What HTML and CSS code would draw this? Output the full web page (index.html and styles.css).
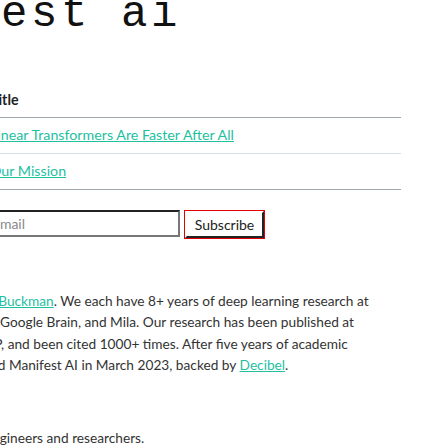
FILE: index.html
```html
<!DOCTYPE html>
<html lang="en">
<head>
<meta charset="utf-8">
<title>Manifest AI</title>
<link rel="stylesheet" href="styles.css">
</head>
<body>
<header class="masthead">
  <h1 class="logo">Manifest ai</h1>
</header>
<main class="content">
  <table class="posts">
    <thead>
      <tr><th>Title</th></tr>
    </thead>
    <tbody>
      <tr><td><a href="#">Linear Transformers Are Faster After All</a></td></tr>
      <tr><td><a href="#">Our Mission</a></td></tr>
    </tbody>
  </table>
  <form class="subscribe">
    <input class="email" type="email" placeholder="Email">
    <button class="btn" type="button">Subscribe</button>
  </form>
</main>
<section class="about">
  <p class="bio">We are Carles Gelada and <a href="#">Jacob Buckman</a>. We each have 8+ years of deep learning research at<br>Apple, OpenAI, Microsoft, Meta, Google Brain, and Mila. Our research has been published at<br>NeurIPS, ICML, ICLR and EMNLP, and been cited 1000+ times. After five years of academic<br>research together, we co-founded Manifest AI in March 2023, backed by <a href="#">Decibel</a>.</p>
  <p class="hiring">We are currently hiring skilled engineers and researchers.</p>
</section>
</body>
</html>
```
FILE: styles.css
```css
html, body {
  margin: 0;
  padding: 0;
  background: #ffffff;
  overflow: hidden;
}
body {
  width: 448px;
  height: 448px;
  font-family: Lato, "Noto Sans", sans-serif;
  font-size: 14px;
  color: #333333;
}
a {
  color: #1fbf9f;
  text-decoration: underline;
}
.masthead {
  display: flow-root;
  height: 83px;
}
.logo {
  margin: -8px 0 0 -149px;
  font-family: "Liberation Mono", "DejaVu Sans Mono", monospace;
  font-weight: normal;
  font-size: 44px;
  line-height: 44px;
  letter-spacing: 3.6px;
  color: #111111;
  white-space: nowrap;
}
.content {
  margin-left: -10px;
  width: 411px;
}
.posts {
  width: 100%;
  border-collapse: separate;
  border-spacing: 0;
  font-size: 14.25px;
}
.posts th,
.posts td {
  text-align: left;
  line-height: 20px;
}
.posts th {
  padding: 7px 0;
  font-weight: bold;
  color: #222222;
  border-bottom: 1px solid #a0a8b0;
}
.posts td {
  padding: 7px 0 8px;
  border-bottom: 1px solid #d8dde2;
}
.posts tbody tr:last-child td {
  border-bottom-color: #a0a8b0;
}
.subscribe {
  display: flex;
  align-items: flex-start;
  gap: 5px;
  margin-top: 20px;
}
.email {
  box-sizing: border-box;
  width: 193px;
  height: 27px;
  margin: 0 0 0 -3px;
  padding: 0 3px;
  font-family: Lato, sans-serif;
  font-size: 14px;
  border-width: 2px;
  border-style: solid;
  border-color: #222222 #777777 #777777 #222222;
  background: #ffffff;
}
.email::placeholder {
  color: #8a8a8a;
}
.btn {
  box-sizing: border-box;
  height: 27px;
  width: 79px;
  margin-top: 1px;
  padding: 0 6px;
  font-family: Lato, sans-serif;
  font-size: 14px;
  color: #222222;
  background: #ffffff;
  border-width: 2px;
  border-style: solid;
  border-color: #ffffff #222222 #222222 #ffffff;
  outline: 1px solid #e00000;
}
.about {
  margin-left: -197px;
  margin-top: 52px;
  font-size: 13.7px;
}
.bio {
  margin: 0;
  line-height: 21.3px;
  white-space: nowrap;
}
.hiring {
  margin: 52px 0 0 0;
  line-height: 21.3px;
  white-space: nowrap;
}
```
